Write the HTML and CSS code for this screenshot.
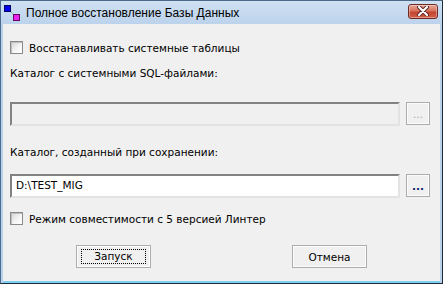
FILE: index.html
```html
<html>
<head>
<meta charset="utf-8">
<link rel="stylesheet" href="styles.css">
</head>
<body>
<div class="window">
  <div class="titlebar">
    <svg class="appIcon" width="16" height="16" viewBox="0 0 16 16">
      <path d="M6 6 L11 11" stroke="#2a9a2a" stroke-width="1" stroke-dasharray="1 1"/>
      <rect x="0.5" y="0.5" width="6" height="6" fill="#0000ee" stroke="#000066"/>
      <rect x="9.5" y="9.5" width="6" height="6" fill="#ee22ee" stroke="#660066"/>
    </svg>
    <span class="titleText">Полное восстановление Базы Данных</span>
    <div class="closeBtn">
      <svg width="14" height="10" viewBox="0 0 14 10">
        <path d="M3 1 L11 9 M11 1 L3 9" stroke="#5a2020" stroke-width="4" stroke-linecap="round"/>
        <path d="M3 1 L11 9 M11 1 L3 9" stroke="#ffffff" stroke-width="2.2" stroke-linecap="round"/>
      </svg>
    </div>
  </div>
  <div class="client">
    <div class="checkRow first">
      <span class="checkbox"></span>
      <span>Восстанавливать системные таблицы</span>
    </div>
    <div class="label lbl1">Каталог с системными SQL-файлами:</div>
    <div class="pathRow row1">
      <div class="edit disabled"></div>
      <div class="browse disabled"><span>...</span></div>
    </div>
    <div class="label lbl2">Каталог, созданный при сохранении:</div>
    <div class="pathRow row2">
      <div class="edit">D:\TEST_MIG</div>
      <div class="browse"><span>...</span></div>
    </div>
    <div class="checkRow second">
      <span class="checkbox"></span>
      <span>Режим совместимости с 5 версией Линтер</span>
    </div>
    <div class="buttons">
      <div class="btn okBtn"><span class="focus">Запуск</span></div>
      <div class="btn cancelBtn"><span>Отмена</span></div>
    </div>
  </div>
</div>
</body>
</html>
```

FILE: styles.css
```css
body {
  margin: 0;
  background: #ffffff;
}

.window {
  width: 443px;
  height: 284px;
  box-sizing: border-box;
  display: flex;
  flex-direction: column;
  background: #b9d1ea;
  border: 1px solid #4c6a8a;
  border-bottom-color: #1c2a3a;
  border-right-color: #1c2a3a;
  font-family: "DejaVu Sans", sans-serif;
  font-size: 10.5px;
  color: #000000;
}

.titlebar {
  height: 23px;
  display: flex;
  align-items: center;
  padding-left: 3px;
  background: linear-gradient(#cfe0f2, #bcd3ec);
}

.appIcon {
  margin-right: 6px;
}

.titleText {
  font-family: "Liberation Sans", sans-serif;
  font-size: 12px;
  color: #000000;
  flex: 1;
}

.closeBtn {
  width: 30px;
  height: 15px;
  margin-right: 4px;
  margin-top: -3px;
  box-sizing: border-box;
  border: 1px solid #6e2b24;
  border-radius: 3px;
  background: linear-gradient(#e9a898, #d7725d 45%, #c4452f 55%, #d0604a);
  box-shadow: inset 0 0 0 1px rgba(255,255,255,0.35);
  display: flex;
  align-items: center;
  justify-content: center;
}

.client {
  flex: 1;
  margin: 0 2px 0 2px;
  padding-left: 7px;
  background: #f0f0f0;
  border-bottom: 2px solid #7fd0f0;
}

.checkRow {
  display: flex;
  align-items: center;
  height: 13px;
}
.checkRow.first { margin-top: 17px; }
.checkRow.second { margin-top: 14px; }

.checkbox {
  width: 11px;
  height: 11px;
  margin-right: 6px;
  border: 1px solid #8a8a8a;
  background: linear-gradient(135deg, #d4d4d4, #f6f6f6 60%, #ffffff);
  box-shadow: inset 1px 1px 0 #bfbfbf;
}

.label {
  height: 14px;
  line-height: 14px;
}
.lbl1 { margin-top: 12px; }
.lbl2 { margin-top: 19px; }

.pathRow {
  display: flex;
  height: 24px;
}
.row1 { margin-top: 22px; }
.row2 { margin-top: 15px; }

.edit {
  width: 390px;
  box-sizing: border-box;
  border: 2px solid;
  border-color: #828282 #e3e3e3 #e3e3e3 #828282;
  background: #ffffff;
  padding-left: 4px;
  line-height: 19px;
}
.edit.disabled {
  background: #f0f0f0;
}

.browse {
  width: 24px;
  height: 23px;
  margin-left: 6px;
  box-sizing: border-box;
  border: 1px solid #acacac;
  box-shadow: inset 0 0 0 1px #fcfcfc;
  background: #f0f0f0;
  display: flex;
  justify-content: center;
  line-height: 22px;
  color: #0a246a;
  font-weight: bold;
}
.browse.disabled {
  color: #a9a9a9;
  font-weight: normal;
}

.buttons {
  display: flex;
  margin-top: 20px;
}

.btn {
  width: 75px;
  height: 23px;
  box-sizing: border-box;
  border: 1px solid #adadad;
  box-shadow: inset 0 0 0 1px #fdfdfd;
  background: #f0f0f0;
  display: flex;
  align-items: center;
  justify-content: center;
}
.okBtn { margin-left: 66px; }
.cancelBtn { margin-left: 141px; }

.focus {
  width: 65px;
  height: 15px;
  line-height: 13px;
  box-sizing: border-box;
  border: 1px dotted #000000;
  text-align: center;
}
```
